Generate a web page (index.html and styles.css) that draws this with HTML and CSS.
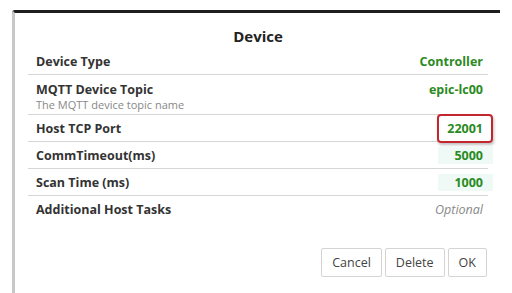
FILE: index.html
```html
<!DOCTYPE html>
<html lang="en">
<head>
  <meta charset="UTF-8" />
  <title>Device</title>
  <link rel="stylesheet" href="styles.css">
</head>
<body>
  <div class="dialog">
    <div class="title">Device</div>
    <div class="rows">
      <div class="row">
        <div class="label">Device Type</div>
        <div class="value">Controller</div>
      </div>
      <div class="row tall">
        <div class="label">MQTT Device Topic<div class="hint">The MQTT device topic name</div></div>
        <div class="value">epic-lc00</div>
      </div>
      <div class="row">
        <div class="label">Host TCP Port</div>
        <div class="value boxed">22001</div>
      </div>
      <div class="row">
        <div class="label">CommTimeout(ms)</div>
        <div class="value tint">5000</div>
      </div>
      <div class="row">
        <div class="label">Scan Time (ms)</div>
        <div class="value tint">1000</div>
      </div>
      <div class="row last">
        <div class="label">Additional Host Tasks</div>
        <div class="value optional">Optional</div>
      </div>
    </div>
    <div class="actions">
      <button class="btn">Cancel</button>
      <button class="btn">Delete</button>
      <button class="btn">OK</button>
    </div>
  </div>
</body>
</html>
```

FILE: styles.css
```css
* { box-sizing: border-box; margin: 0; padding: 0; }
body {
  background: #fff;
  font-family: 'Open Sans', 'DejaVu Sans', sans-serif;
  color: #333;
  width: 512px;
  height: 293px;
  overflow: hidden;
}
.dialog {
  margin: 10px 0 0 12px;
  width: 488px;
  height: 290px;
  border-top: 3px solid #1e1e1e;
  border-left: 3px solid #c8c8c8;
  border-top-left-radius: 3px;
  background: #fff;
  padding: 0 12px 0 13px;
}
.title {
  text-align: center;
  font-weight: 700;
  font-size: 15px;
  height: 35px;
  line-height: 24px;
  padding-top: 11px;
  color: #222;
}
.row {
  display: flex;
  justify-content: space-between;
  align-items: center;
  height: 27px;
  border-bottom: 1px solid #d6d6d6;
  padding: 0 5px 0 8px;
  font-size: 12.5px;
}
.row.tall { height: 40px; align-items: flex-start; padding-top: 6px; }
.row.last { border-bottom: none; }
.label { font-weight: 700; color: #333; }
.hint { font-weight: 400; font-size: 11px; color: #888; line-height: 13px; }
.value { font-weight: 700; color: #2a8a22; }
.tint {
  background: #effaf6;
  padding: 0 10px 0 16px;
  margin-right: -10px;
}
.optional { font-weight: 400; font-style: italic; color: #888; }
.boxed {
  border: 2px solid #c1272d;
  border-radius: 4px;
  padding: 4px 8px;
  margin-right: -10px;
  box-shadow: 1px 2px 3px rgba(0,0,0,0.25);
}
.actions {
  display: flex;
  justify-content: flex-end;
  gap: 3px;
  margin-top: 25px;
  padding-right: 1px;
}
.btn {
  font-family: inherit;
  font-size: 12.5px;
  color: #444;
  background: #fff;
  border: 1px solid #d4d4d4;
  border-radius: 2px;
  height: 29px;
  padding: 0 10px;
}
```
